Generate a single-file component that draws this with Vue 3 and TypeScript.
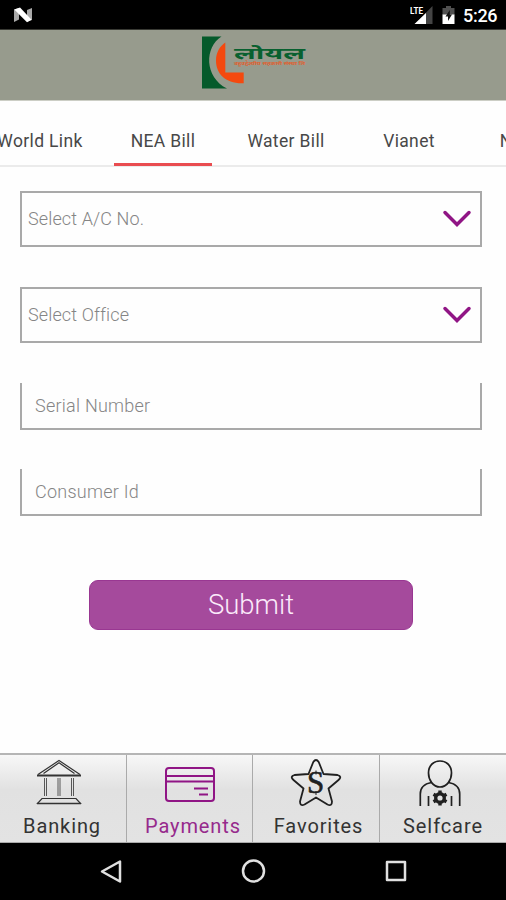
<script setup lang="ts">
interface Field { label: string; kind: 'select' | 'input' }

const tabs: string[] = ['World Link', 'NEA Bill', 'Water Bill', 'Vianet', 'NTC Bill']
const activeTab = 'NEA Bill'
const fields: Field[] = [
  { label: 'Select A/C No.', kind: 'select' },
  { label: 'Select Office', kind: 'select' },
  { label: 'Serial Number', kind: 'input' },
  { label: 'Consumer Id', kind: 'input' },
]
const navItems: string[] = ['Banking', 'Payments', 'Favorites', 'Selfcare']
const activeNav = 'Payments'
</script>

<template>
  <div class="screen">
    <div class="status">
      <svg class="n-logo" width="20" height="16" viewBox="0 0 20 16">
        <path d="M1 2.5 6 1v11.5L1 15zM14 3l5-2v12l-5 1.8z" fill="#a9a9a9" />
        <path d="M1.3 2.5 7 .4 18.5 12.8 14 15.2z" fill="#fff" />
      </svg>
      <div class="status-right">
        <svg width="24" height="20" viewBox="0 0 24 20">
          <path d="M22.5 1v18H5z" fill="#444" />
          <path d="M16 8v11H4.5z" fill="#fff" />
          <text x="0" y="9" class="lte" textLength="13" lengthAdjust="spacingAndGlyphs">LTE</text>
        </svg>
        <svg width="13" height="19" viewBox="0 0 13 19">
          <path d="M4 1h5v2h3.500v7H.5V3H4z" fill="#505050" />
          <path d="M.5 9.500h12V19H.5z" fill="#fff" />
          <path d="M7.800 5 3.500 11.500H6V16l4-6.500H7.800z" fill="#111" />
        </svg>
        <span class="clock">5:26</span>
      </div>
    </div>

    <header class="brand">
      <svg width="108" height="56" viewBox="0 0 108 56">
        <path d="M1 .5h19.500C3.500 11 3 41 26 52.500H1z" fill="#055a2b" />
        <path d="M24.300 6.500V36.500h18.400v10.700C25 48 15 38 15 24.500c0-8 4-14.500 9.300-18z" fill="#f4490f" />
        <text x="33" y="22.500" class="brand-name" textLength="71" lengthAdjust="spacingAndGlyphs">लोयल</text>
        <text x="33" y="28.500" class="brand-sub" textLength="71" lengthAdjust="spacingAndGlyphs">बहुउद्देश्यीय सहकारी संस्था लि</text>
      </svg>
    </header>

    <nav class="tabs">
      <div v-for="tab in tabs" :key="tab" class="tab" :class="{ active: tab === activeTab }">
        <span>{{ tab }}</span>
      </div>
    </nav>

    <main class="form">
      <div v-for="field in fields" :key="field.label" class="field" :class="field.kind">
        <span>{{ field.label }}</span>
        <svg v-if="field.kind === 'select'" width="30" height="20" viewBox="0 0 30 20">
          <path d="M3 4.500 15 16.500 27 4.500" fill="none" stroke="#901585" stroke-width="3.500" stroke-linecap="round" />
        </svg>
      </div>
      <button class="submit" type="button">Submit</button>
    </main>

    <footer class="bottom">
      <div v-for="item in navItems" :key="item" class="item" :class="[item.toLowerCase(), { active: item === activeNav }]">
        <svg v-if="item === 'Banking'" width="52" height="52" viewBox="0 0 52 52" fill="none" stroke="#333" stroke-width="1.200">
          <path d="M5 19.500 26 5.500 47 19.500M10.500 18.500 26 7.800 41.500 18.500" />
          <path d="M4 20.500h44" stroke-width="1.800" />
          <path d="M11.500 23v18M13.500 23v18M25 23v18M27 23v18M38.500 23v18M40.500 23v18" stroke-width=".8" />
          <path d="M9 43.500h34l4.500 5H4.500z" />
          <path d="M4 48.500h44" stroke-width="1.600" />
        </svg>
        <svg v-else-if="item === 'Payments'" width="52" height="52" viewBox="0 0 52 52" fill="none" stroke="#901585" stroke-width="2">
          <rect x="2" y="13" width="48" height="33" rx="3" />
          <path d="M2 21h48M2 26.500h48M30 33.500h14M35 39.500h9" />
        </svg>
        <svg v-else-if="item === 'Favorites'" width="52" height="52" viewBox="0 0 52 52">
          <path d="M23.300 7Q26 3 28.700 7L33.500 19 47.500 20Q52.500 21.500 48.500 25L38.500 33.500 42 46.500Q42 51.500 37.500 49.500L26 42.500 14.500 49.500Q10 51.500 10 46.500L13.500 33.500 3.500 25Q-.5 21.500 4.500 20L18.500 19Z" fill="none" stroke="#202020" stroke-width="1.800" stroke-linejoin="round" />
          <text x="26" y="37.500" text-anchor="middle" class="dollar">S</text>
          <path d="M26 15.500v4M26 36v4" stroke="#202020" stroke-width="1" />
        </svg>
        <svg v-else width="52" height="52" viewBox="0 0 52 52" fill="none" stroke="#202020" stroke-width="1.700">
          <path d="M26 6c7 0 11.500 5 11.500 12S33 32 26 32 14.500 25 14.500 18 19 6 26 6z" />
          <path d="M17.500 27.500C9 29 6.300 33 6.300 39v12M34.500 27.500C43 29 45.700 33 45.700 39v12M14.500 41v10M37.500 41v10" />
          <circle cx="26" cy="43" r="4.300" stroke-width="3.400" />
          <path d="M26 35.500v4M26 46.500v4M19.500 39.300l3.500 2M29 44.700l3.500 2M19.500 46.700l3.500-2M29 41.300l3.500-2" stroke-width="3.400" />
        </svg>
        <span>{{ item }}</span>
      </div>
    </footer>

    <div class="system">
      <svg width="24" height="26" viewBox="0 0 24 26"><path d="M21 2.500v20L3 12.500z" /></svg>
      <svg width="26" height="26" viewBox="0 0 26 26"><circle cx="12.500" cy="12" r="10.500" /></svg>
      <svg width="24" height="26" viewBox="0 0 24 26"><rect x="3" y="3" width="18" height="18" /></svg>
    </div>
  </div>
</template>

<style>
body { margin: 0; background: #fefefe; }
</style>

<style scoped>
.screen { width: 506px; height: 900px; overflow: hidden; display: flex; flex-direction: column; background: #fefefe; font-family: Roboto, "Liberation Sans", sans-serif; }
.screen * { box-sizing: border-box; }
svg { display: block; flex: none; }
.status { height: 30px; flex: none; background: #000; display: flex; align-items: center; justify-content: space-between; padding: 0 9px 0 13px; border-bottom: 1px solid #393a34; }
.status-right { display: flex; align-items: center; }
.status-right svg + svg { margin-left: 8px; }
.lte { font-size: 9.500px; font-weight: 700; fill: #fff; stroke: #000; stroke-width: 1px; paint-order: stroke; }
.clock { color: #fff; font-size: 18px; font-weight: 500; line-height: 20px; width: 34px; margin-left: 8px; padding-top: 2px; letter-spacing: -.3px; }
.brand { height: 71px; flex: none; background: #979b8d; border-bottom: 1px solid #ccceC5; padding: 6px 0 0 201px; }
.brand-name { font: 700 16px "Noto Sans Devanagari", "Noto Sans", sans-serif; fill: #08602f; }
.brand-sub { font: 700 4.500px "Noto Sans Devanagari", "Noto Sans", sans-serif; fill: #df6131; }
.tabs { height: 66px; flex: none; display: grid; grid-template-columns: repeat(5, 123px); margin-left: -22px; border-bottom: 2px solid #ebebeb; }
.tab { display: flex; justify-content: center; padding-top: 30px; color: #484848; font-size: 17.500px; line-height: 21px; letter-spacing: .35px; white-space: nowrap; }
.tab span { width: 98px; height: 35px; display: flex; justify-content: center; padding-left: 1px; }
.tab.active span { border-bottom: 3px solid #e94c50; }
.form { height: 586px; flex: none; padding: 24px 24px 0 20px; display: flex; flex-direction: column; }
.field { display: flex; align-items: center; justify-content: space-between; border: 2px solid #a9a9a9; color: #858585; font-size: 18px; font-weight: 300; letter-spacing: .25px; }
.select { height: 56px; margin-bottom: 40px; padding: 0 8px 2px 6px; }
.select span { letter-spacing: .12px; }
.input { height: 47px; border-top: 0; margin-bottom: 39px; padding: 0 13px 1px 13px; }
.submit { width: 324px; height: 50px; margin: 25px 0 0 69px; padding: 0 0 2px; border: 1px solid #993792; border-radius: 9px; background: #a54a9c; color: #fbeafa; font: 300 27.500px Roboto, sans-serif; letter-spacing: 0; }
.bottom { height: 90px; flex: none; display: grid; grid-template-columns: 127px 126px 127px 126px; border-top: 2px solid #b5b5b5; border-bottom: 1px solid #aaa; background: linear-gradient(#f7f7f7, #e1e1e1 35px, #e3e3e3); }
.item { display: flex; flex-direction: column; align-items: center; border-right: 1px solid #aaa; color: #333; font-size: 20px; line-height: 24px; letter-spacing: .9px; }
.item:last-child { border-right: 0; }
.item span { margin-top: 7px; }
.item.banking { padding-right: 8px; }
.item.banking span { margin-left: 6px; }
.item.payments span { margin-left: 7px; }
.item.favorites span { margin-left: 5px; }
.item.selfcare { padding-right: 7px; }
.item.selfcare span { margin-left: 7px; }
.item.active { color: #962a8c; }
.dollar { font: 400 31px "Liberation Serif", serif; fill: #202020; stroke: #202020; stroke-width: .6px; }
.system { flex: 1; background: #000; display: flex; justify-content: space-between; padding: 16px 98px 0 99px; }
.system svg { fill: none; stroke: #e0e0e0; stroke-width: 2.500; stroke-linejoin: round; }
</style>
